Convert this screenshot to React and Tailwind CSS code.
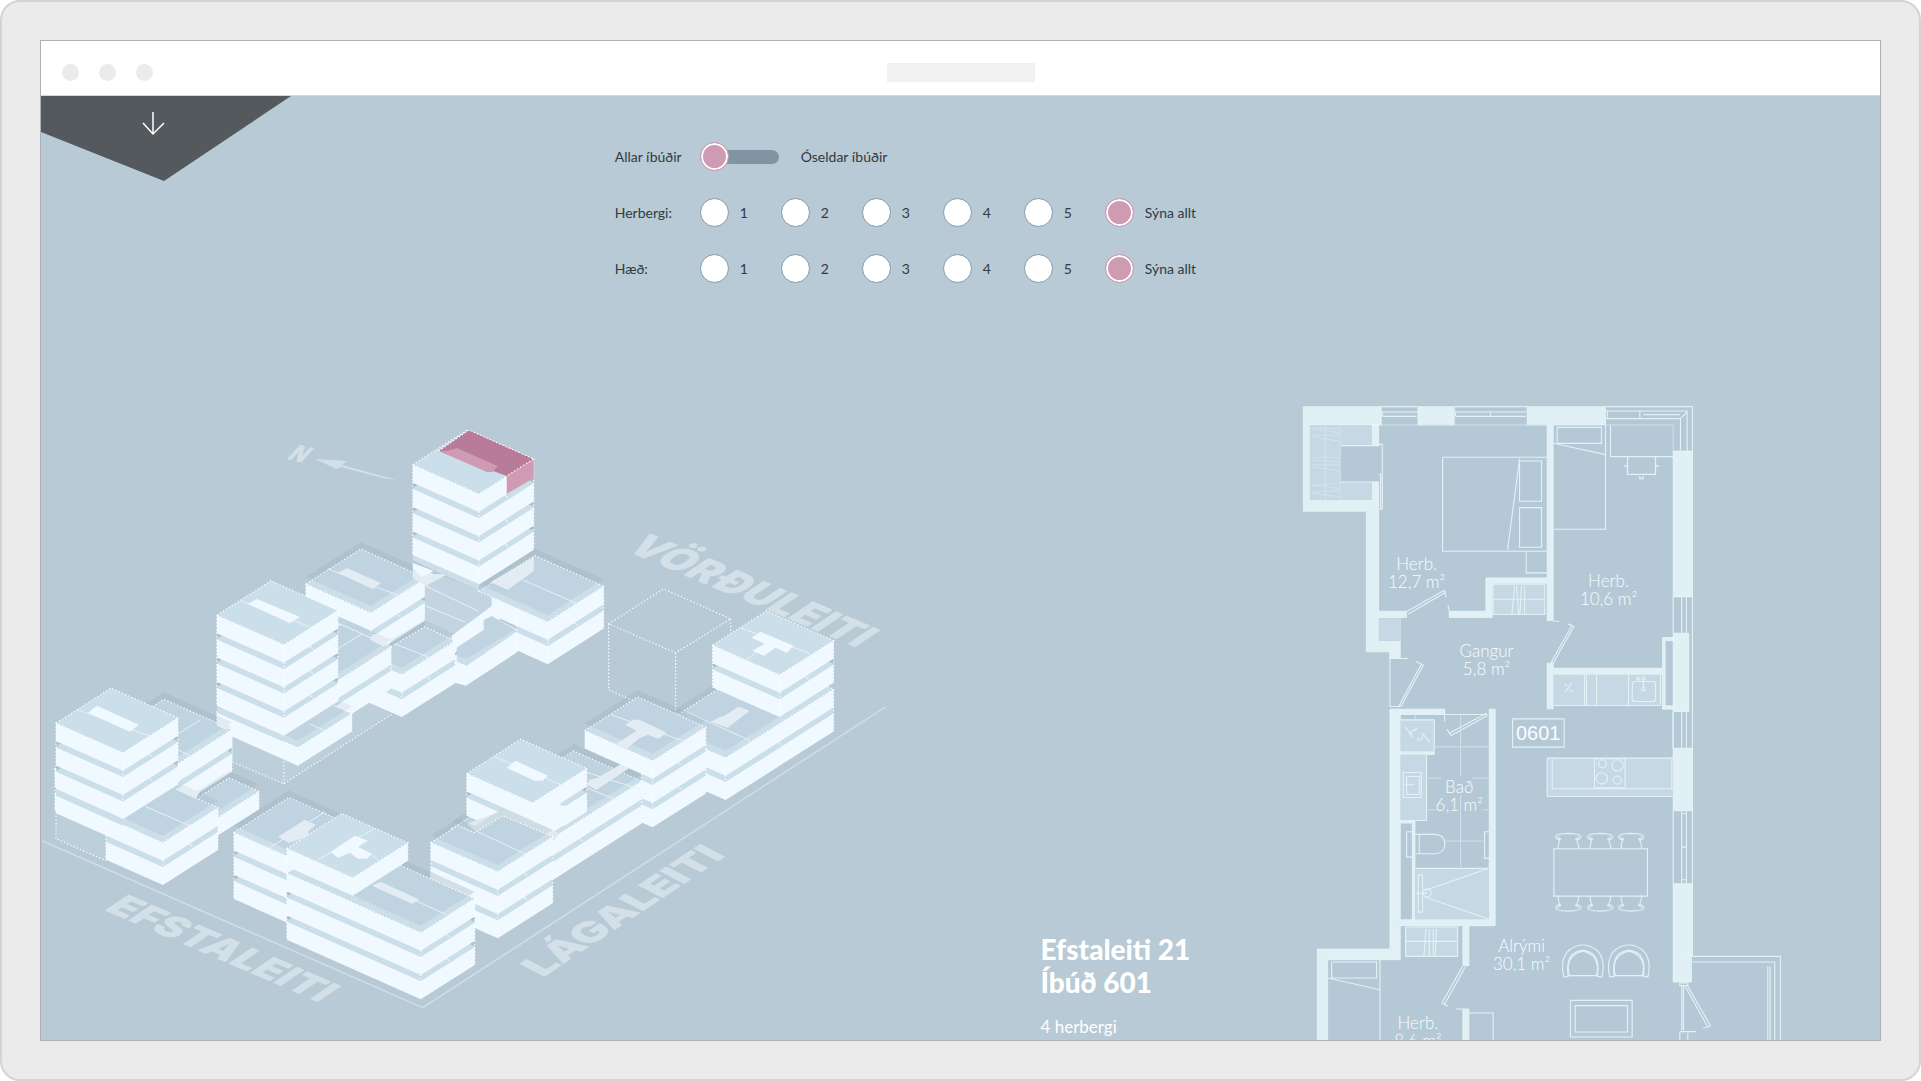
import React from "react";

/* ---------- Isometric site map ---------- */

const SA = 0.444; // slope of left-hand walls
const SB = 0.636; // slope of right-hand walls
const FLOOR = 18; // wall height of a floor
const PITCH = 24.3; // floor to floor distance

const WALL = "#f0f9ff";
const BAND = "#cbdfea";
const NOTCH = "#aac0cd";
const SHADE = { fill: "rgb(125,145,165)", fillOpacity: 0.15 };
const DOTS = { fill: "none", stroke: "#ffffff", strokeWidth: 1.2, strokeDasharray: "1.3 2.2" };

const pts = (list) => list.map(([px, py]) => px.toFixed(1) + "," + py.toFixed(1)).join(" ");

function Slab({ x, y, a, b }) {
  return (
    <polygon
      fill={WALL}
      points={pts([
        [x - a, y - a * SA],
        [x, y],
        [x + b, y - b * SB],
        [x + b, y - b * SB + FLOOR],
        [x, y + FLOOR],
        [x - a, y - a * SA + FLOOR],
      ])}
    />
  );
}

function Block({ x, y, a, b, floors = 1, lengths, low, roof, notch = true, children }) {
  const spans = Array.from({ length: floors }, (_, i) => (lengths ? lengths[i] : a));
  const top = roof || [
    [x - a, y - a * SA],
    [x - a + b, y - a * SA - b * SB],
    [x + b, y - b * SB],
    [x, y],
  ];
  const last = spans[floors - 1];
  const h = (floors - 1) * PITCH + FLOOR;
  return (
    <g>
      {spans.map((s, i) => {
        if (i === 0) return null;
        const gy = y + i * PITCH - 7;
        return (
          <g key={"g" + i}>
            <polygon
              fill={BAND}
              points={pts([
                [x - s, gy - s * SA],
                [x, gy],
                [x + b, gy - b * SB],
                [x + b, gy - b * SB + 8],
                [x, gy + 8],
                [x - s, gy - s * SA + 8],
              ])}
            />
            {notch && (
              <>
                <polygon
                  fill={NOTCH}
                  points={pts([
                    [x - s, gy - s * SA + 1],
                    [x - s + 5, gy - s * SA + 3],
                    [x - s, gy - s * SA + 6],
                  ])}
                />
                <polygon
                  fill={NOTCH}
                  points={pts([
                    [x + b, gy - b * SB + 1],
                    [x + b - 5, gy - b * SB + 4],
                    [x + b, gy - b * SB + 6],
                  ])}
                />
              </>
            )}
          </g>
        );
      })}
      {spans.map((s, i) => (
        <Slab key={i} x={x} y={y + i * PITCH} a={s} b={b} />
      ))}
      {spans.map((s, i) =>
        i === 0 ? null : (
          <path
            key={"t" + i}
            stroke={WALL}
            strokeWidth="1"
            d={`M${x + b * 0.5 - 3} ${y + i * PITCH - 7 - b * 0.5 * SB} l5 4`}
          />
        )
      )}
      <polygon fill={BAND} points={pts(top)} />
      {low && <polygon {...SHADE} points={pts(top.map(([px, py]) => [px, py - 7]))} />}
      <polygon {...DOTS} points={pts(top)} />
      <path
        {...DOTS}
        d={`M${x} ${y} v${h} M${x + b} ${y - b * SB} v${h} M${x - last} ${y - last * SA} v${h}`}
      />
      {children}
    </g>
  );
}

const Ghost = ({ p }) => <polygon points={p} fill="#e3ecf2" />;
const Bright = ({ p }) => <polygon points={p} fill={WALL} />;
const Seam = ({ d }) => <path d={d} fill="none" stroke="#e6f1f8" strokeWidth="1" />;

function SiteMap() {
  return (
    <svg viewBox="41 405 1000 635" className="block w-full" role="img" aria-label="Yfirlitsmynd">
      <path d="M42 841 L423 1008 L886 707" fill="none" stroke="#cfdde6" strokeWidth="1.6" />

      <g fill="#d3e0e8" fontFamily="Inter, sans-serif" fontWeight="900" fontSize="38">
        <text transform="matrix(1 .43 -.86 .58 103 910)">EFSTALEITI</text>
        <text transform="matrix(.92 -.61 .9 .47 543 978)">LÁGALEITI</text>
        <text transform="matrix(1 .42 -.92 .62 624 550)">VÖRÐULEITI</text>
        <text fontSize="22" transform="matrix(.95 .22 -.85 .9 286 459)">N</text>
        <polygon points="315,459 347,461 342,465 397,480 383,478 341,467 337,469" />
      </g>

      {/* planned building, outline only */}
      <path
        {...DOTS}
        d="M609 624 L664 589 L731 619 L676 653 Z M609 624 V690 L636 702 M676 653 V714 M731 619 V634"
      />

      {/* north cluster */}
      <Block x={371} y={613} a={65} b={55} floors={2} low>
        <Seam d="M328 569 L400 596" />
        <Ghost p="347,568 381,583 373,589 338,573" />
      </Block>
      <polygon points="425,585 440,575 512,602 452,640 425,640" fill="#c4d5e1" />
      <Seam d="M426 586 L478 611 M426 606 L465 622" />
      <polygon points="452,636 500,600 500,622 483,632 452,655" fill={WALL} />
      <polygon points="413,565 434,574 448,574 426,586 413,578" fill="#e3ecf2" />
      <polygon points="455,656 483,637 483,622 492,616 518,630 518,652 466,686 455,683" fill={WALL} />
      <polygon points="457,648 484,630 484,620 492,616 518,631 467,666 457,662" fill={BAND} />
      <polygon points="457,648 484,630 484,620 492,616 515,630 467,659 457,656" {...SHADE} />
      <Block x={548} y={622} a={69} b={56} floors={2} lengths={[56, 31]} low notch={false}>
        <Seam d="M523 580 L578 604" />
        <Ghost p="491,582 534,557 534,571 508,590" />
      </Block>
      <Block x={479} y={494} a={66} b={55} floors={4} />
      <polygon points="413,568 413,560 440,573 479,590 479,584 413,555" fill={BAND} />
      <polygon points="413,568 413,563 434,571 422,577" fill={WALL} />
      <polygon points="469,430 534,459 507,476 439,451" fill="#b87b99" />
      <polygon points="457,448 498,466 493,472 487,472 439,451 447,451" fill="#cf9bb3" />
      <polygon points="507,476 534,459 534,478 507,494" fill="#cf9bb3" />
      <path {...DOTS} d="M439 451 L469 430 L534 459 L507 476" />

      {/* ground outline */}
      <polygon points="232,735 232,762 284,784 391,715 391,690" fill="#bdcfda" />
      <path {...DOTS} d="M232 735 V762 L284 784 L391 715 V690 M284 784 V755" />

      <Block
        x={402}
        y={675}
        a={32}
        b={53}
        floors={2}
        low
        notch={false}
        roof={[[391, 647], [425, 627], [455, 641], [402, 675], [391, 670]]}
      >
        <Seam d="M395 644 L428 657" />
      </Block>
      <Block x={284} y={715} a={50} b={107} floors={2} low notch={false}>
        <Seam d="M338 649 L362 634" />
        <Ghost p="374,634 390,640 384,647 370,640" />
      </Block>
      <Block x={298} y={748} a={81} b={54} low>
        <Seam d="M310 724 L325 731" />
        <Ghost p="345,703 352,707 346,711 336,707" />
      </Block>
      <Block x={284} y={645} a={67} b={54} floors={4}>
        <Seam d="M241 601 L310 627" />
        <Bright p="257,599 300,617 290,623 248,604" />
      </Block>
      <polygon points="217,707 284,736 284,742 217,713" fill={BAND} />

      {/* west cluster */}
      <Block x={123} y={799} a={68} b={109} floors={2} low>
        <Seam d="M178 734 L201 720 M178 750 L192 757" />
        <Ghost p="217,720 232,727 226,730 217,726" />
      </Block>
      <Block x={197} y={831} a={30} b={62} low />
      <polygon points="56,795 56,839 106,862 130,840" fill="#bdcfda" />
      <path {...DOTS} d="M56 795 V839 L106 861" />
      <Block x={163} y={843} a={107} b={55} floors={2} lengths={[107, 57]} low notch={false}>
        <Seam d="M146 807 L190 826" />
        <Ghost p="184,786 200,792 196,799 178,791" />
      </Block>
      <Block x={123} y={753} a={67} b={55} floors={3}>
        <Seam d="M78 710 L149 736" />
        <Bright p="97,706 139,725 130,732 88,713" />
      </Block>
      <polygon points="56,789 123,819 123,826 56,796" fill={BAND} />

      {/* east row */}
      <Block x={726} y={758} a={68} b={108} floors={2} lengths={[20, 20]} low notch={false}>
        <Seam d="M687 712 L751 741" />
        <Ghost p="739,707 750,711 728,728 711,722 721,717 723,717" />
      </Block>
      <Block x={780} y={675} a={67} b={54} floors={2}>
        <Seam d="M741 628 L811 654 M747 660 L763 648" />
        <Bright p="761,632 794,646 787,653 776,648 764,656 753,651 765,644 752,638" />
      </Block>
      <Block x={520} y={859} a={68} b={122} floors={2} low notch={false}>
        <Seam d="M566 766 L642 790 M587 788 L614 799" />
        <Ghost p="622,764 630,768 597,790 587,785 590,780 598,778" />
      </Block>
      <Block x={653} y={761} a={68} b={53} floors={3} lengths={[68, 11, 11]} low notch={false}>
        <Seam d="M612 715 L683 741" />
        <Ghost p="634,720 640,720 667,733 659,739 648,735 639,739 626,750 615,745 637,731 625,725" />
      </Block>
      <Block x={533} y={803} a={66} b={54} floors={2}>
        <Seam d="M495 757 L564 786" />
        <Bright p="516,761 548,776 543,781 535,781 507,768" />
      </Block>
      <polygon points="533,835 533,812 563,800 560,806 575,806 587,800 587,812 565,826" fill={WALL} />
      <polygon points="467,824 505,810 540,824 552,830 560,834 553,842 480,835" fill="#dfe9ef" />
      <Block
        x={498}
        y={872}
        a={67}
        b={55}
        floors={3}
        low
        notch={false}
        roof={[[431, 843], [458, 826], [475, 833], [503, 816], [553, 837], [498, 872]]}
      >
        <Seam d="M478 832 L525 854" />
      </Block>
      <polygon points="431,872 474,892 470,897 431,880" fill="#e3ecf2" />

      {/* south cluster */}
      <Block x={300} y={862} a={66} b={55} floors={3} low>
        <Seam d="M270 848 L325 812" />
        <Ghost p="305,820 316,825 308,832 311,836 289,843 278,837" />
      </Block>
      <Block x={421} y={933} a={134} b={54} floors={3} low>
        <Seam d="M378 884 L447 915" />
        <Ghost p="381,882 420,900 412,904 372,886" />
      </Block>
      <Block x={353} y={878} a={66} b={55}>
        <Seam d="M316 861 L375 829 M370 853 L380 862" />
        <Bright p="355,836 368,841 358,847 372,854 367,859 358,859 350,853 338,858 331,852" />
      </Block>
    </svg>
  );
}

/* ---------- Floor plan ---------- */

const SOLID = "#e0f0f4";
const LINE = { fill: "none", stroke: "#e2f1f6", strokeWidth: 3.4 };
const THIN = { fill: "none", stroke: "#d3e5ee", strokeWidth: 2.6 };

const UpperWalls = () => (
  <g>
    <path d="M39 50 H1208 V1980 H82 V1678 H300 V786 H229 V364 H39 Z" fill="#b5c8d6" />
    <g fill={SOLID} stroke="#f0fafc" strokeWidth="2">
      <path d="M40 50 H274 V105 H58 V332 H266 V664 H350 V683 H266 V754 H331 V803 H300 V786 H229 V364 H40 Z" />
      <path d="M384 50 H493 V105 H384 Z" />
      <path d="M712 50 H947 V105 H790 V692 H772 V580 H607 V683 H478 V664 H588 V564 H772 V105 H712 Z" />
      <path d="M246 105 H266 V167 H246 Z M246 276 H266 V332 H246 Z" />
      <path d="M1150 183 H1205 V621 H1150 Z M1150 730 H1197 V965 H1150 Z" />
      <path d="M772 820 H790 V835 H1118 V743 H1150 V752 H1126 V948 H1150 V958 H1118 V854 H790 V957 H772 Z" />
    </g>
    <g fill="#c6d8e3">
      <path d="M60 108 H151 V330 H60 Z M151 108 H246 V166 H151 Z M151 277 H246 V330 H151 Z M266 685 H331 V753 H266 Z" />
      <path d="M610 583 H765 V674 H610 Z M791 855 H1116 V947 H791 Z" />
    </g>
    <g {...LINE}>
      <path d="M274 50 H384 M274 66 H384 M278 79 H380 M278 66 V79 M493 50 H712 M493 66 H712 M497 79 H708 M497 66 V79 M602 66 V79 M947 50 H1208 M947 63 H1192 V183 M947 86 H1172 V180 M953 63 V86 M1050 63 V86 M1060 74 H1170 M1172 86 L1192 66" />
      <path d="M266 163 H277 V358 H266 M266 253 H272 V358 M152 167 H266 M152 276 H266" />
      <path d="M458 202 H772 M458 202 V484 H772 M689 207 L653 480 M689 213 H755 V334 H689 Z M689 353 H755 V472 H689 Z M709 486 V549 H772" />
      <path d="M791 418 H947 V105 M791 160 L947 194 M802 112 H935 V160 H802 Z M962 105 V200 H1150" />
      <path d="M1013 200 V253 H1097 V200 M1003 228 H1013 M1097 228 H1108 M1050 258 V266 H1060 V258" strokeWidth="4" />
      <path d="M350 665 L462 602 L466 608 L355 672 M464 603 L468 622 M474 646 L478 664" />
      <path d="M790 694 H808 M835 702 L852 710 L790 820 L784 818 L846 707" />
      <path d="M300 806 H355 M378 814 L400 826 L334 948 L328 946 L394 823 M300 786 V950 H332" />
      <path d="M610 583 H765 V674 H610 Z M610 628 H765 M674 588 L666 672 M680 588 L686 672 M695 588 L690 672 M704 588 V672" />
      <path d="M1150 621 V730 M1176 621 V730 M1190 621 V730 M1208 50 V1700 M1150 965 V1075 M1176 965 V1075 M1190 965 V1075" />
      <path d="M791 947 H1112 M884 855 V947 M890 855 V947 M920 855 V947 M1016 855 V947 M1112 855 V947 M1028 882 Q1028 875 1036 875 H1089 Q1097 875 1097 883 V928 Q1097 935 1089 935 H1035 Q1027 935 1027 928 Z" />
      <circle cx="1045" cy="866" r="4" />
      <circle cx="1061" cy="866" r="5" />
      <circle cx="1061" cy="898" r="5" />
      <path d="M1061 870 V894 M825 882 L831 888 M842 900 L848 906 M846 880 L826 906" />
    </g>
    <g {...THIN}>
      <path d="M266 105 H772 M151 108 V330 M106 108 V330 M331 685 V753 M1150 105 V183 M947 105 H1150" />
      <path d="M66 115 H148 M66 118 L148 128 M66 135 H148 M66 140 L148 154 M66 202 H148 M66 210 L148 216 M66 225 H148 M66 231 L148 242 M66 288 L148 279 M66 285 L148 296 M66 306 L148 302 M66 310 L148 320" />
    </g>
  </g>
);

const DiningChair = ({ t }) => (
  <g transform={t}>
    <path d="M0 12 Q0 2 38 1 Q76 2 76 12 Q70 22 62 20 Q66 12 70 11 M0 12 Q6 22 14 20 Q10 12 6 11 M8 46 Q8 26 16 16 M70 46 Q68 26 60 16" />
  </g>
);

const Armchair = ({ t }) => (
  <g transform={t}>
    <path d="M5 96 Q-8 40 22 14 Q62 -14 102 14 Q132 40 119 96 L106 94 Q112 50 96 30 Q62 2 28 30 Q12 50 18 94 Z" />
    <path d="M22 94 Q10 50 36 30 Q62 8 88 30 Q114 50 102 94 M18 92 H106" />
  </g>
);

const LowerWalls = () => (
  <g transform="translate(0 810)">
    <path d="M1208 890 H1472 V1200 H1208 Z" fill="#b5c8d6" />
    <g fill={SOLID} stroke="#f0fafc" strokeWidth="2">
      <path d="M300 148 H331 V780 H598 V148 H616 V798 H537 V918 H519 V798 H331 V900 H113 V1200 H82 V868 H300 Z" />
      <path d="M331 148 H464 V164 H331 Z M331 274 H433 V284 H331 Z" />
      <path d="M331 482 H375 V780 H367 V490 H331 Z" />
      <path d="M1150 265 H1205 V453 H1150 Z M1150 672 H1205 V967 H1150 Z M519 1050 H537 V1200 H519 Z" />
    </g>
    <g fill="#c6d8e3">
      <path d="M332 180 H433 V274 H332 Z M332 284 H410 V482 H332 Z M376 626 H596 V778 H376 Z M347 802 H503 V890 H347 Z M772 295 H1150 V410 H772 Z" />
    </g>
    <g {...LINE}>
      <path d="M464 148 V186 M464 164 H592 M590 160 L478 220 L484 227 L594 166 M478 220 L472 208" />
      <path d="M332 180 H433 V274 M332 482 H410 V284 M340 338 H394 V413 H340 Z M350 350 H388 V404 H350 Z M342 375 H374" />
      <path d="M346 202 L370 234 M382 207 Q362 210 360 226 M382 207 L374 212 M396 218 L420 248 M398 220 Q400 240 384 242 M384 234 V242" />
      <path d="M376 524 H436 Q464 526 465 552 Q464 580 436 582 H376 M388 524 V582 M350 516 H366 M350 516 V592 H366 M584 516 H598 M584 516 V596 H598" />
      <path d="M376 626 H596 M596 626 L405 692 M405 712 L596 778 M385 646 H398 V757 H385 Z M376 701 H412" />
      <circle cx="412" cy="700" r="12" />
      <path d="M347 802 H503 V890 H347 Z M347 845 H503 M408 808 L402 888 M418 808 V888 M430 808 V888 M440 808 L436 888" />
      <path d="M772 295 H1150 M772 295 V410 H1150 M787 295 V387 H1150 M914 297 H1006 V384 H914 Z M1146 295 V387" />
      <circle cx="938" cy="312" r="12" />
      <circle cx="983" cy="317" r="17" />
      <circle cx="936" cy="356" r="17" />
      <circle cx="982" cy="361" r="12" />
      <path d="M668 177 H823 V262 H668 Z M792 567 H1073 V709 H792 Z" />
      <DiningChair t="translate(797 520)" />
      <DiningChair t="translate(893 520)" />
      <DiningChair t="translate(986 520)" />
      <DiningChair t="translate(797 755) scale(1 -1)" />
      <DiningChair t="translate(893 755) scale(1 -1)" />
      <DiningChair t="translate(986 755) scale(1 -1)" />
      <Armchair t="translate(817 856)" />
      <Armchair t="translate(955 856)" />
      <path d="M842 1022 H1027 V1132 H842 Z M856 1038 H1013 V1117 H856 Z" />
      <path d="M1150 156 V265 M1176 453 V672 M1190 453 V672 M1150 453 V672 M1176 562 H1190 M1176 462 H1190 M1176 660 H1190" />
      <path d="M1208 890 H1472 V1200 M1208 907 H1455 V1200 M1434 920 V1200 M1441 920 V1200" />
      <path d="M1170 970 H1194 V978 H1170 Z M1176 980 V1112 M1181 980 V1112 M1186 980 L1254 1102 L1262 1098 L1194 980 M1254 1102 L1240 1106 M1170 1116 H1218 M1170 1116 V1200 M1194 1120 V1200" />
      <path d="M526 922 L464 1034 L456 1030 L518 920 M456 1030 L474 1040 M498 1048 H537 M537 1060 H610 V1200" />
      <path d="M270 900 V1200 M125 907 H260 V955 H125 Z M113 955 L270 990" />
      <circle cx="1193" cy="885" r="7" />
    </g>
    <g {...THIN}>
      <path d="M512 166 V350 M512 405 V622 M433 261 H598 M410 355 H455 M548 355 H598 M410 450 H440 M580 450 H598 M465 544 H584 M376 164 V180" />
    </g>
  </g>
);

const rooms = [
  { x: 380, y: 541, name: "Herb.", size: "12,7 m²" },
  { x: 956, y: 592, name: "Herb.", size: "10,6 m²" },
  { x: 590, y: 801, name: "Gangur", size: "5,8 m²" },
  { x: 508, y: 1209, name: "Bað", size: "6,1 m²" },
  { x: 695, y: 1687, name: "Alrými", size: "30,1 m²" },
  { x: 384, y: 1917, name: "Herb.", size: "8,6 m²" },
];

function FloorPlan() {
  return (
    <svg viewBox="36 45 1734 1905" className="block w-full" role="img" aria-label="Grunnmynd íbúðar 601">
      <UpperWalls />
      <LowerWalls />
      <g fill="#f8fdff" fontFamily="Lato, sans-serif" fontWeight="300" fontSize="51" textAnchor="middle">
        {rooms.map((r) => (
          <g key={r.name + r.size}>
            <text x={r.x} y={r.y}>{r.name}</text>
            <text x={r.x} y={r.y + 54}>{r.size}</text>
          </g>
        ))}
      </g>
      <text
        x="745"
        y="1051"
        textAnchor="middle"
        fontSize="60"
        fill="#f8fdff"
        fontFamily="Liberation Sans, sans-serif"
      >
        0601
      </text>
    </svg>
  );
}

/* ---------- Filters ---------- */

function RadioRow({ legend, name }) {
  const options = ["1", "2", "3", "4", "5", "Sýna allt"];
  return (
    <fieldset className="flex h-[29px] items-center">
      <legend className="float-left w-[85px]">{legend}</legend>
      {options.map((o) => (
        <label key={o} className="flex w-[81px] items-center gap-[11px] whitespace-nowrap">
          <input
            type="radio"
            name={name}
            defaultChecked={o === "Sýna allt"}
            className="h-[29px] w-[29px] shrink-0 appearance-none rounded-full border border-[#7f99a8] bg-white checked:border-[#cf9bb3] checked:bg-[#cf9bb3] checked:shadow-[inset_0_0_0_2px_#ffffff]"
          />
          {o}
        </label>
      ))}
    </fieldset>
  );
}

function Filters() {
  return (
    <form className="flex flex-col gap-[27px] pt-[46px] text-[14px] leading-4 text-[#333b40]">
      <div className="flex h-[29px] items-center">
        <label htmlFor="unsold" className="w-[85px]">Allar íbúðir</label>
        <input
          id="unsold"
          type="checkbox"
          role="switch"
          aria-label="Óseldar íbúðir"
          className="flex h-[14px] w-[79px] appearance-none items-center rounded-full bg-[#7f95a2] before:h-[29px] before:w-[29px] before:rounded-full before:border before:border-[#cf9bb3] before:bg-[#cf9bb3] before:shadow-[inset_0_0_0_2px_#ffffff] before:content-[''] checked:justify-end"
        />
        <label htmlFor="unsold" className="ml-[22px]">Óseldar íbúðir</label>
      </div>
      <RadioRow legend="Herbergi:" name="rooms" />
      <RadioRow legend="Hæð:" name="floor" />
    </form>
  );
}

export default function App() {
  return (
    <div className="h-screen overflow-hidden bg-white">
      <div className="h-full rounded-[20px] border-2 border-[#d4d4d4] bg-[#ebebeb] p-[38px] font-[Lato,sans-serif]">
        <div className="flex h-full flex-col overflow-hidden border border-[#adb1b4] bg-[#b7cad5]">
          <header className="grid h-[55px] shrink-0 grid-cols-3 items-center border-b border-[#d5d9db] bg-white px-[21px] pt-2">
            <div className="flex gap-5">
              <span className="h-[17px] w-[17px] rounded-full bg-[#ebebeb]" />
              <span className="h-[17px] w-[17px] rounded-full bg-[#ebebeb]" />
              <span className="h-[17px] w-[17px] rounded-full bg-[#ebebeb]" />
            </div>
            <div className="h-[19px] w-[148px] justify-self-center bg-[#f1f1f1]" />
          </header>

          <main className="min-h-0 flex-1 overflow-hidden">
            <section className="grid h-[309px] grid-cols-[574fr_1266fr] items-start">
              <button type="button" aria-label="Niður" className="w-[250px]">
                <svg viewBox="0 0 250 85" className="block w-full">
                  <polygon points="0,0 250,0 123,85 0,36" fill="#54595d" />
                  <path d="M112 16 V38 M102 27 L112 38 L123 27" fill="none" stroke="#ffffff" strokeWidth="1.5" />
                </svg>
              </button>
              <Filters />
            </section>

            <section className="grid grid-cols-[1000fr_262fr_578fr]">
              <SiteMap />
              <div className="self-end pb-[3px] text-white">
                <h1 className="text-[28px] leading-[33px] font-black">
                  Efstaleiti 21
                  <br />
                  Íbúð 601
                </h1>
                <p className="mt-[18px] text-[17px] leading-5">4 herbergi</p>
              </div>
              <FloorPlan />
            </section>
          </main>
        </div>
      </div>
    </div>
  );
}
